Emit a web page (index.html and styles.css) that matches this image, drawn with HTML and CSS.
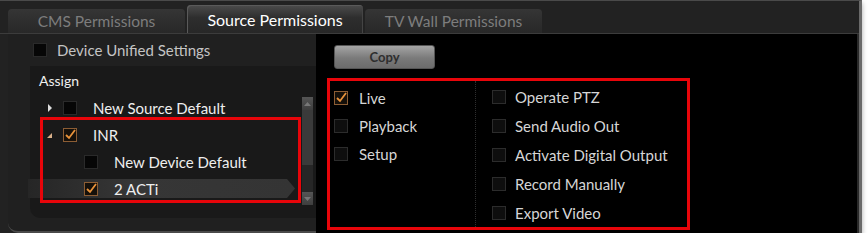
FILE: index.html
```html
<!DOCTYPE html>
<html lang="en">
<head>
    <meta charset="UTF-8">
    <title>Source Permissions</title>
    <link rel="stylesheet" href="styles.css">
</head>
<body>
    <div class="window">
        <div class="tabs">
            <div class="tab">CMS Permissions</div>
            <div class="tab is-active">Source Permissions</div>
            <div class="tab">TV Wall Permissions</div>
        </div>
        <div class="panes">
            <div class="left">
                <div class="unified">
                    <span class="box box--dark"></span>
                    <span>Device Unified Settings</span>
                </div>
                <div class="tree-box">
                    <div class="tree">
                        <div class="tree__title">Assign</div>
                        <div class="tree__row">
                            <svg class="arrow" width="6" height="8" viewBox="0 0 6 8"><path d="M1 0 L5 4 L1 8 Z" fill="#ddd"/></svg>
                            <span class="box box--dark"></span>
                            <span class="tree__label">New Source Default</span>
                        </div>
                        <div class="tree__row">
                            <svg class="arrow" width="6" height="8" viewBox="0 0 6 8"><path d="M5 2 L5 7 L0 7 Z" fill="#d9b08a"/></svg>
                            <span class="box is-checked"><svg width="12" height="12" viewBox="0 0 12 12"><path d="M2 6 L5 9 L11 1" fill="none" stroke="#e8923a" stroke-width="1.8"/></svg></span>
                            <span class="tree__label">INR</span>
                        </div>
                        <div class="tree__row tree__row--child">
                            <span class="box box--dark"></span>
                            <span class="tree__label">New Device Default</span>
                        </div>
                        <div class="tree__row tree__row--child is-selected">
                            <span class="box is-checked"><svg width="12" height="12" viewBox="0 0 12 12"><path d="M2 6 L5 9 L11 1" fill="none" stroke="#e8923a" stroke-width="1.8"/></svg></span>
                            <span class="tree__label">2 ACTi</span>
                        </div>
                    </div>
                    <div class="scroll">
                        <div class="scroll__btn"><svg width="7" height="4" viewBox="0 0 7 4"><path d="M0 4 L3.5 0 L7 4 Z" fill="#777"/></svg></div>
                        <div class="scroll__thumb"></div>
                        <div class="scroll__track"></div>
                        <div class="scroll__btn"><svg width="7" height="4" viewBox="0 0 7 4"><path d="M0 0 L3.5 4 L7 0 Z" fill="#777"/></svg></div>
                    </div>
                </div>
                <div class="mark mark--tree"></div>
            </div>
            <div class="right">
                <button class="copy">Copy</button>
                <div class="options">
                    <div class="options__col options__col--left">
                        <div class="option">
                            <span class="box is-checked"><svg width="12" height="12" viewBox="0 0 12 12"><path d="M2 6 L5 9 L11 1" fill="none" stroke="#e8923a" stroke-width="1.8"/></svg></span>
                            <span>Live</span>
                        </div>
                        <div class="option"><span class="box"></span><span>Playback</span></div>
                        <div class="option"><span class="box"></span><span>Setup</span></div>
                    </div>
                    <div class="options__col options__col--right">
                        <div class="option"><span class="box"></span><span>Operate PTZ</span></div>
                        <div class="option"><span class="box"></span><span>Send Audio Out</span></div>
                        <div class="option"><span class="box"></span><span>Activate Digital Output</span></div>
                        <div class="option"><span class="box"></span><span>Record Manually</span></div>
                        <div class="option"><span class="box"></span><span>Export Video</span></div>
                    </div>
                </div>
            </div>
        </div>
    </div>
</body>
</html>
```

FILE: styles.css
```css
body { margin: 0; background: #fff; font-family: Lato, "Liberation Sans", sans-serif; font-size: 15px; }
.window { width: 862px; height: 233px; box-sizing: border-box; background: #222; border-top: 1px solid #4a4a4a; border-right: 3px solid #6a6a6a; box-shadow: 0 3px 5px rgba(0,0,0,.35); }

.tabs { display: flex; align-items: flex-end; height: 32px; padding-left: 8px; }
.tab { width: 177px; height: 24px; line-height: 24px; text-align: center; color: #7d7d7d; font-size: 15.5px; background: linear-gradient(#353535, #282828); border-radius: 4px 4px 0 0; margin-right: 2px; }
.tab.is-active { width: 176px; height: 28px; line-height: 30px; color: #fff; font-size: 16px; background: linear-gradient(#4c4c4c, #2e2e2e 45%, #272727); box-shadow: inset 1px 1px 0 #5a5a5a, inset -1px 0 0 #444; }

.panes { display: flex; height: 199px; border-top: 1px solid #3c3c3c; }
.left { position: relative; width: 308px; margin-left: 8px; background: #202020; border-bottom: 2px solid #4a4a4a; border-radius: 0 0 0 10px; }
.unified { display: flex; align-items: center; gap: 10px; height: 32px; padding-left: 25px; color: #c4c4c4; }
.tree-box { display: flex; margin-left: 22px; height: 152px; background: #191919; border-radius: 0 0 0 10px; }
.tree { flex: 1; }
.tree__title { height: 28px; line-height: 30px; padding-left: 9px; color: #f0f0f0; font-size: 14px; }
.tree__row { display: flex; align-items: center; height: 27px; padding-left: 17px; color: #eee; }
.tree__row .arrow { margin-right: 10px; }
.tree__row .box { margin-right: 16px; }
.tree__row--child { padding-left: 54px; }
.tree__row.is-selected { margin-left: -2px; padding-left: 56px; margin-right: 7px; background: linear-gradient(90deg, #262626, #363636 40%, #343434); clip-path: polygon(0 4px, calc(100% - 8px) 4px, 100% 50%, calc(100% - 8px) calc(100% - 4px), 0 calc(100% - 4px)); }

.scroll { display: flex; flex-direction: column; width: 11px; margin: 31px 3px 13px 0; background: #262626; }
.scroll__btn { display: flex; align-items: center; justify-content: center; height: 13px; background: linear-gradient(#555, #3e3e3e); }
.scroll__thumb { height: 55px; background: #3a3a3a; }
.scroll__track { flex: 1; }

.box { display: inline-flex; align-items: center; justify-content: center; flex: none; width: 14px; height: 14px; box-sizing: border-box; border: 1px solid #2c2c2c; background: #0e0e0e; }
.box--dark { background: #060606; border-color: #2a2a2a; }
.box.is-checked { border-color: #8c5d34; background: #15100a; }

.mark { position: absolute; border: 3px solid #e8050a; }
.mark--tree { left: 32px; top: 83px; width: 255px; height: 80px; }

.right { flex: 1; background: #000; padding: 11px 0 0 11px; border-right: 2px solid #2a2a2a; }
.copy { display: block; margin-left: 7px; width: 101px; height: 24px; border: 1px solid #555; border-radius: 3px; background: linear-gradient(#a4a4a4, #7a7a7a 55%, #6c6c6c); color: #2e2e2e; font-family: inherit; font-size: 13px; font-weight: bold; }
.options { display: flex; width: 357px; height: 146px; margin-top: 9px; border: 3px solid #e8050a; }
.options__col--left { width: 146px; padding: 3px 0 0 4px; box-sizing: border-box; border-right: 1px dotted #2e2e2e; }
.options__col--right { padding: 1px 0 0 16px; }
.option { display: flex; align-items: center; gap: 11px; height: 28px; color: #d6d6d6; }
.options__col--right .option { height: 29px; gap: 9px; }
```
